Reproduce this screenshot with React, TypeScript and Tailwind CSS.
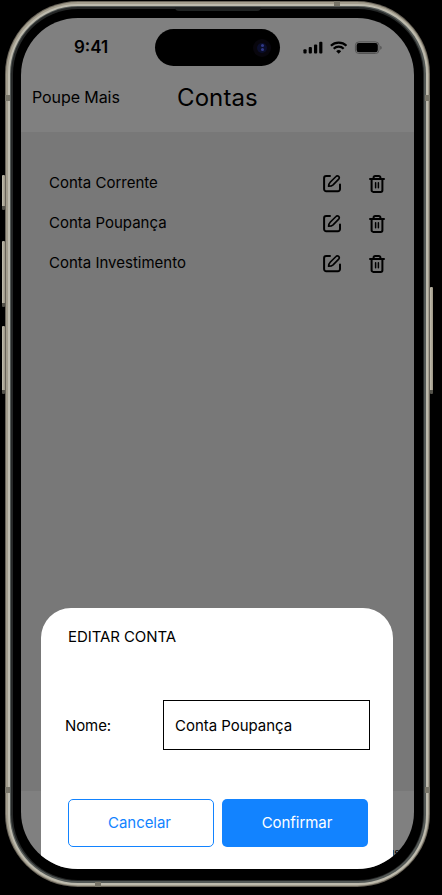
import React from "react";

const ACCOUNTS = ["Conta Corrente", "Conta Poupança", "Conta Investimento"];

function EditIcon() {
  return (
    <svg width="20" height="20" viewBox="0 0 20 20" fill="none" stroke="#000" strokeWidth="2" strokeLinecap="round" strokeLinejoin="round">
      <path d="M8 2.9H4.2A2.1 2.1 0 0 0 2.1 5v11.1a2.1 2.1 0 0 0 2.1 2.1h11.7a2.1 2.1 0 0 0 2.1-2.1v-4.6" />
      <path d="M6.6 13.2c0-2 .6-3 1.8-4.2l5.6-5.5a1.8 1.8 0 0 1 2.7 0 1.8 1.8 0 0 1 0 2.7l-5.6 5.6c-1.2 1.1-2.4 1.4-4.5 1.4Z" strokeWidth="1.7" />
    </svg>
  );
}

function TrashIcon() {
  return (
    <svg width="20" height="20" viewBox="0 0 20 20" fill="none" stroke="#000" strokeWidth="2" strokeLinecap="round" strokeLinejoin="round">
      <path d="M3 6h14M6.6 5.7V4.6A1.6 1.6 0 0 1 8.2 3h3.6a1.6 1.6 0 0 1 1.6 1.6v1.1M4.6 6.2v11a1.7 1.7 0 0 0 1.7 1.7h7.4a1.7 1.7 0 0 0 1.7-1.7v-11" />
      <path d="M8.6 9.7v5M11.4 9.7v5" strokeWidth="1.5" />
    </svg>
  );
}

function StatusIcons() {
  return (
    <svg width="80" height="14" viewBox="0 0 80 14" fill="#000">
      <rect x="0.4" y="8.2" width="3.2" height="4.2" rx="1" />
      <rect x="5.7" y="6.1" width="3.2" height="6.3" rx="1" />
      <rect x="11" y="3.4" width="3.2" height="9" rx="1" />
      <rect x="16.2" y="0.7" width="3.2" height="11.7" rx="1" />
      <g fill="none" stroke="#000" strokeWidth="2.2">
        <path d="M27.9 4.7a11.2 11.2 0 0 1 15.6 0" />
        <path d="M30.7 7.7a7.1 7.1 0 0 1 10 0" />
      </g>
      <path d="M35.7 12.7l-2.5-2.5a3.7 3.7 0 0 1 5 0z" />
      <rect x="52.4" y="0.9" width="23.6" height="11.6" rx="3.5" fill="none" stroke="#535353" />
      <rect x="53.6" y="2.1" width="21.2" height="9.2" rx="2.3" />
      <path d="M77.3 4.7v4c1.8-.7 1.8-3.3 0-4z" fill="#4d4d4d" />
    </svg>
  );
}

function AccountRow({ name }: { name: string }) {
  return (
    <li className="flex h-10 items-center pl-7 pr-[27px]">
      <span className="flex-1 text-[15px]">{name}</span>
      <button className="mr-[25px]"><EditIcon /></button>
      <button><TrashIcon /></button>
    </li>
  );
}

function EditSheet() {
  return (
    <section className="absolute bottom-0 left-5 h-[261px] w-[352px] rounded-t-[30px] bg-white pl-6 pr-[23px] pt-[18px]">
      <h2 className="pl-[3px] text-[15px] leading-[22px] tracking-[-0.08px]">EDITAR CONTA</h2>
      <div className="mt-[52px] flex items-center">
        <label className="w-[98px] pt-[2px] text-[15px] tracking-[-0.1px]">Nome:</label>
        <div className="flex h-[50px] w-[207px] items-center border border-black pl-[11px] pt-[2px] text-[15px] tracking-[-0.03px]">
          <span>Conta Poupança</span>
        </div>
      </div>
      <div className="mt-[49px] flex gap-2 pl-[3px]">
        <button className="h-12 w-[146px] rounded-[5px] border border-[#1283ff] pr-[3px] text-[15px] tracking-[-0.06px] text-[#1283ff]">Cancelar</button>
        <button className="h-12 w-[146px] rounded-[5px] bg-[#1283ff] pl-1 text-[15px] tracking-[-0.06px] text-white">Confirmar</button>
      </div>
    </section>
  );
}

function SideButton({ className }: { className: string }) {
  return <div className={`absolute rounded-[1px] border-b-4 border-b-[#55534b] bg-gradient-to-r from-[#c5c0b1] to-[#9a9483] ${className}`} />;
}

export default function App() {
  return (
    <div className="relative h-[895px] w-[442px] overflow-hidden bg-black pl-[5px] pt-px font-['Inter',sans-serif] text-black">
      <SideButton className="left-[2px] top-[175px] h-[35px] w-[3px]" />
      <SideButton className="left-[2px] top-[241px] h-[66px] w-[3px]" />
      <SideButton className="left-[2px] top-[326px] h-[68px] w-[3px]" />
      <SideButton className="left-[430px] top-[287px] h-[107px] w-[3px]" />

      <div className="relative h-[886px] w-[425px] rounded-[73px] bg-[#69645a] p-px">
        <div className="h-full rounded-[72px] bg-[#a39d8d] p-[1.5px]">
          <div className="h-full rounded-[70px] bg-[#bdbaad] p-[2px]">
            <div className="h-full rounded-[68px] bg-[#535856] p-[1.5px]">
              <div className="h-full rounded-[67px] bg-[#252727] p-[1.5px]">
                <div className="h-full rounded-[65px] bg-black pl-[8.5px] pt-[9.5px]">
                  <main className="relative flex h-[851px] w-[393px] flex-col overflow-hidden rounded-[57px] bg-[#808080]">
                    <header className="h-[114px]">
                      <div className="flex h-[59px] items-center pl-[53px]">
                        <time className="w-[81px] pt-px text-[17px] font-semibold">9:41</time>
                        <div className="flex h-[37px] w-[125px] items-center justify-end rounded-full bg-black pr-[9px]">
                          <div className="flex h-[18px] w-[18px] items-center justify-center rounded-full bg-[#08060d]">
                            <div className="flex h-[10px] w-[10px] flex-col items-center justify-center gap-px rounded-full bg-[#0b0e2c]">
                              <span className="h-[3px] w-[3px] rounded-full bg-[#303986]" />
                              <span className="h-[3px] w-[3px] rounded-full bg-[#303986]" />
                            </div>
                          </div>
                        </div>
                        <div className="ml-[23px]"><StatusIcons /></div>
                      </div>
                      <div className="flex h-[41px] items-center pl-[11px]">
                        <span className="w-[145px] pb-[2px] text-base tracking-[-0.08px]">Poupe Mais</span>
                        <h1 className="text-2xl tracking-[0.1px]">Contas</h1>
                      </div>
                    </header>
                    <ul className="h-[659px] bg-[#787878] pt-[31px]">
                      {ACCOUNTS.map((name) => <AccountRow key={name} name={name} />)}
                    </ul>
                    <footer className="flex h-[78px] items-end justify-end pb-[9px] pr-[14px] text-[11px] leading-[13px]">
                      <span>us</span>
                    </footer>
                    <EditSheet />
                  </main>
                </div>
              </div>
            </div>
          </div>
        </div>
        <div className="absolute left-[170px] top-[6px] h-[4px] w-[86px] rounded-b-[4px] bg-[#202323]" />
        <div className="absolute left-0 top-[94px] h-[6px] w-[5px] bg-[#777468]" />
        <div className="absolute right-0 top-[94px] h-[6px] w-[5px] bg-[#777468]" />
        <div className="absolute left-0 top-[786px] h-[6px] w-[5px] bg-[#777468]" />
        <div className="absolute right-0 top-[786px] h-[6px] w-[5px] bg-[#777468]" />
        <div className="absolute left-[329px] top-0 h-[5px] w-[6px] bg-[#777468]" />
        <div className="absolute bottom-0 left-[90px] h-[5px] w-[6px] bg-[#777468]" />
      </div>
    </div>
  );
}
